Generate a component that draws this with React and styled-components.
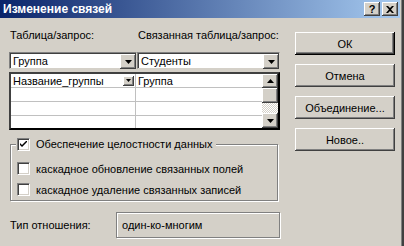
import styled, { createGlobalStyle } from "styled-components";

const face = "#D4D0C8";

const GlobalStyle = createGlobalStyle`
  html, body {
    margin: 0;
    padding: 0;
    background: ${face};
  }
  body {
    font-family: "Liberation Sans", Arial, sans-serif;
    font-size: 11px;
    color: #000;
  }
`;

const raised = `
  background: ${face};
  box-shadow: inset -1px -1px #404040, inset 1px 1px #fff,
    inset -2px -2px #808080, inset 2px 2px ${face};
`;

const Window = styled.div`
  width: 404px;
  height: 246px;
  box-sizing: border-box;
  padding-right: 4px;
  background: ${face};
  box-shadow: inset -2px 0 #404040, inset -3px 0 #808080;
  display: flex;
  flex-direction: column;
  overflow: hidden;
`;

const TitleBar = styled.div`
  height: 18px;
  flex: none;
  display: flex;
  align-items: center;
  justify-content: space-between;
  padding: 0 2px 0 3px;
  background: linear-gradient(to right, #0a246a, #a6caf0);
`;

const Title = styled.span`
  color: #fff;
  font-weight: bold;
  font-size: 12px;
`;

const CaptionButtons = styled.div`
  display: flex;
  gap: 2px;
`;

const CaptionButton = styled.div`
  width: 16px;
  height: 14px;
  box-sizing: border-box;
  display: flex;
  align-items: center;
  justify-content: center;
  font-weight: bold;
  font-size: 11px;
  ${raised}
`;

const Body = styled.div`
  display: flex;
  padding: 11px 0 0 9px;
`;

const LeftPane = styled.div`
  width: 271px;
  display: flex;
  flex-direction: column;
`;

const Columns = styled.div`
  display: grid;
  grid-template-columns: 128px 143px;
`;

const Label = styled.div`
  height: 13px;
  line-height: 13px;
  padding-left: 1px;
  white-space: nowrap;
`;

const Combo = styled.div`
  height: 17px;
  box-sizing: border-box;
  display: flex;
  background: #fff;
  border: 1px solid;
  border-color: #808080 ${face} ${face} #808080;
  box-shadow: inset 1px 1px #404040;
  padding: 1px 0 0 1px;
  margin-top: 10px;
`;

const ComboText = styled.div`
  flex: 1;
  line-height: 14px;
  padding-left: 2px;
  white-space: nowrap;
`;

const DropButton = styled.div`
  width: ${(p) => p.$w || 16}px;
  height: ${(p) => p.$h || 15}px;
  flex: none;
  display: flex;
  align-items: center;
  justify-content: center;
  ${raised}
`;

const Arrow = ({ up }) => (
  <svg width="7" height="4" viewBox="0 0 7 4">
    <polygon points={up ? "0,4 7,4 3.5,0" : "0,0 7,0 3.5,4"} fill="#000" />
  </svg>
);

const Grid = styled.div`
  margin-top: 3px;
  height: 58px;
  box-sizing: border-box;
  border: 2px solid #000;
  border-color: #404040 #000 #000 #404040;
  background: #fff;
  display: flex;
`;

const Rows = styled.div`
  flex: 1;
  overflow: hidden;
`;

const Row = styled.div`
  display: grid;
  grid-template-columns: 125px 1fr;
  height: 14px;
  box-sizing: border-box;
  border-bottom: 1px solid #c0c0c0;
`;

const Cell = styled.div`
  display: flex;
  align-items: center;
  justify-content: space-between;
  padding: 0 1px 0 2px;
  border-right: ${(p) => (p.$last ? "none" : "1px solid #c0c0c0")};
  white-space: nowrap;
`;

const ScrollBar = styled.div`
  width: 16px;
  display: flex;
  flex-direction: column;
`;

const Track = styled.div`
  flex: 1;
  background: repeating-conic-gradient(#fff 0 25%, ${face} 0 50%) 0 0 / 2px 2px;
`;

const GroupBox = styled.fieldset`
  margin: 7px 0 0 1px;
  width: 268px;
  box-sizing: border-box;
  padding: 8px 0 1px 6px;
  border: 1px solid #808080;
  box-shadow: 1px 1px #fff, inset 1px 1px #fff;
  display: flex;
  flex-direction: column;
  gap: 2px;
`;

const Legend = styled.legend`
  margin-left: -1px;
  padding: 0 4px 0 1px;
  background: ${face};
`;

const CheckRow = styled.label`
  display: flex;
  align-items: center;
  gap: 6px;
  height: ${(p) => (p.$legend ? 14 : 19)}px;
  white-space: nowrap;
`;

const CheckBox = styled.span`
  width: 13px;
  height: 13px;
  box-sizing: border-box;
  flex: none;
  background: #fff;
  border: 1px solid;
  border-color: #808080 #fff #fff #808080;
  box-shadow: inset 1px 1px #404040, inset -1px -1px ${face};
  display: flex;
  align-items: center;
  justify-content: center;
`;

const Check = () => (
  <svg width="7" height="7" viewBox="0 0 7 7">
    <path d="M0 2 L0 4 L2 6 L7 1 L7 -1 L2 4 Z" fill="#000" />
  </svg>
);

const RelationRow = styled.div`
  margin-top: 11px;
  display: flex;
  align-items: center;
`;

const RelationLabel = styled.div`
  width: 106px;
  padding-left: 1px;
`;

const ValueBox = styled.div`
  width: 164px;
  height: 26px;
  box-sizing: border-box;
  display: flex;
  align-items: center;
  padding-left: 5px;
  border: 1px solid #808080;
  box-shadow: 1px 1px #fff, inset 1px 1px #fff;
`;

const RightPane = styled.div`
  margin: 3px 0 0 15px;
  display: flex;
  flex-direction: column;
  gap: 9px;
`;

const Button = styled.button`
  width: 100px;
  height: 23px;
  padding: 0;
  border: none;
  font: inherit;
  color: #000;
  ${raised}
  ${(p) =>
    p.$default &&
    `box-shadow: inset -1px -1px #000, inset 1px 1px #fff, inset -2px -2px #404040,
      inset -3px -3px #808080;`}
`;

const checks = [
  "каскадное обновление связанных полей",
  "каскадное удаление связанных записей",
];

export default function App() {
  return (
    <>
      <GlobalStyle />
      <Window>
        <TitleBar>
          <Title>Изменение связей</Title>
          <CaptionButtons>
            <CaptionButton>?</CaptionButton>
            <CaptionButton>
              <svg width="8" height="7" viewBox="0 0 8 7">
                <path d="M0 0 L2 0 L4 2 L6 0 L8 0 L5 3.5 L8 7 L6 7 L4 5 L2 7 L0 7 L3 3.5 Z" fill="#000" />
              </svg>
            </CaptionButton>
          </CaptionButtons>
        </TitleBar>
        <Body>
          <LeftPane>
            <Columns>
              <Label>Таблица/запрос:</Label>
              <Label>Связанная таблица/запрос:</Label>
            </Columns>
            <Columns>
              <Combo>
                <ComboText>Группа</ComboText>
                <DropButton><Arrow /></DropButton>
              </Combo>
              <Combo>
                <ComboText>Студенты</ComboText>
                <DropButton><Arrow /></DropButton>
              </Combo>
            </Columns>
            <Grid>
              <Rows>
                <Row>
                  <Cell>
                    Название_группы
                    <DropButton $w={11} $h={10}>
                      <svg width="5" height="3" viewBox="0 0 5 3">
                        <polygon points="0,0 5,0 2.5,3" fill="#000" />
                      </svg>
                    </DropButton>
                  </Cell>
                  <Cell $last>Группа</Cell>
                </Row>
                {[0, 1, 2].map((i) => (
                  <Row key={i}>
                    <Cell />
                    <Cell $last />
                  </Row>
                ))}
              </Rows>
              <ScrollBar>
                <DropButton $h={14}><Arrow up /></DropButton>
                <DropButton $h={15} />
                <Track />
                <DropButton $h={15}><Arrow /></DropButton>
              </ScrollBar>
            </Grid>
            <GroupBox>
              <Legend>
                <CheckRow $legend>
                  <CheckBox><Check /></CheckBox>
                  Обеспечение целостности данных
                </CheckRow>
              </Legend>
              {checks.map((c) => (
                <CheckRow key={c}>
                  <CheckBox />
                  {c}
                </CheckRow>
              ))}
            </GroupBox>
            <RelationRow>
              <RelationLabel>Тип отношения:</RelationLabel>
              <ValueBox>один-ко-многим</ValueBox>
            </RelationRow>
          </LeftPane>
          <RightPane>
            <Button $default>ОК</Button>
            <Button>Отмена</Button>
            <Button>Объединение...</Button>
            <Button>Новое..</Button>
          </RightPane>
        </Body>
      </Window>
    </>
  );
}
